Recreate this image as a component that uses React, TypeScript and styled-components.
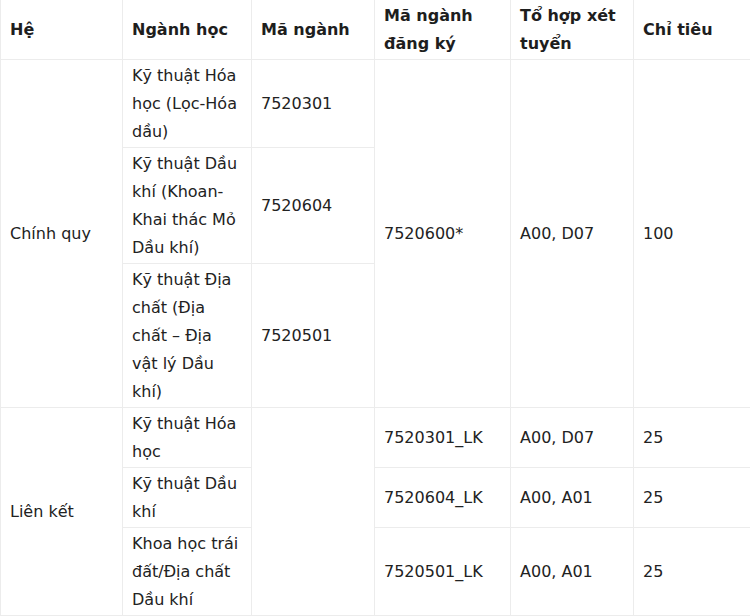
import React from "react";
import styled, { createGlobalStyle } from "styled-components";

const Global = createGlobalStyle`
  html, body { margin: 0; padding: 0; background: #fff; }
  body { font-family: "DejaVu Sans", Verdana, sans-serif; color: #222; }
`;

const Table = styled.table`
  width: 750px;
  margin-top: -1px;
  border-collapse: collapse;
  table-layout: fixed;
  font-size: 16px;
  line-height: 28px;
`;

const Th = styled.th`
  border: 1px solid #ececec;
  padding: 1.5px 9px;
  text-align: left;
  vertical-align: middle;
  font-weight: bold;
  color: #1e1e1e;
`;

const Td = styled.td`
  border: 1px solid #ececec;
  padding: 1.5px 9px;
  text-align: left;
  vertical-align: middle;
  font-weight: normal;
  color: #222;
`;

const widths = [122, 129, 123, 136, 123, 117];

export default function App() {
  return (
    <>
      <Global />
      <Table>
        <colgroup>
          {widths.map((w, i) => (
            <col key={i} style={{ width: w }} />
          ))}
        </colgroup>
        <thead>
          <tr>
            <Th>Hệ</Th>
            <Th>Ngành học</Th>
            <Th>Mã ngành</Th>
            <Th>Mã ngành đăng ký</Th>
            <Th>Tổ hợp xét tuyển</Th>
            <Th>Chỉ tiêu</Th>
          </tr>
        </thead>
        <tbody>
          <tr>
            <Td rowSpan={3}>Chính quy</Td>
            <Td>Kỹ thuật Hóa học (Lọc-Hóa dầu)</Td>
            <Td>7520301</Td>
            <Td rowSpan={3}>7520600*</Td>
            <Td rowSpan={3}>A00, D07</Td>
            <Td rowSpan={3}>100</Td>
          </tr>
          <tr>
            <Td>Kỹ thuật Dầu khí (Khoan-Khai thác Mỏ Dầu khí)</Td>
            <Td>7520604</Td>
          </tr>
          <tr>
            <Td>Kỹ thuật Địa chất (Địa chất – Địa vật lý Dầu khí)</Td>
            <Td>7520501</Td>
          </tr>
          <tr>
            <Td rowSpan={3}>Liên kết</Td>
            <Td>Kỹ thuật Hóa học</Td>
            <Td rowSpan={3}></Td>
            <Td>7520301_LK</Td>
            <Td>A00, D07</Td>
            <Td>25</Td>
          </tr>
          <tr>
            <Td>Kỹ thuật Dầu khí</Td>
            <Td>7520604_LK</Td>
            <Td>A00, A01</Td>
            <Td>25</Td>
          </tr>
          <tr>
            <Td>Khoa học trái đất/Địa chất Dầu khí</Td>
            <Td>7520501_LK</Td>
            <Td>A00, A01</Td>
            <Td>25</Td>
          </tr>
        </tbody>
      </Table>
    </>
  );
}
